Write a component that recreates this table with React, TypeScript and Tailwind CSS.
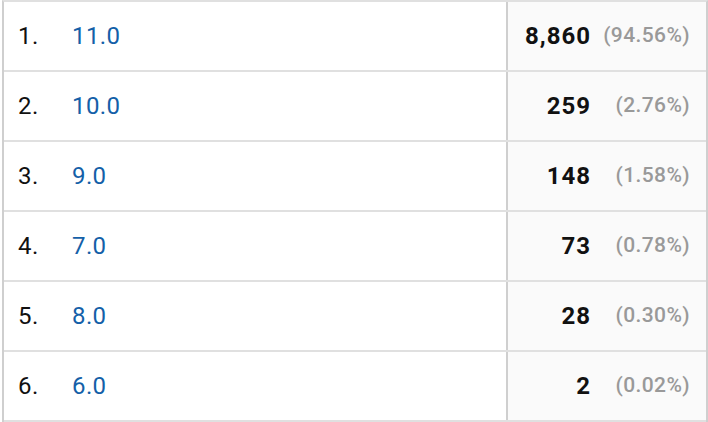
import React from 'react';

interface Row {
  label: string;
  count: string;
  pct: string;
}

const rows: Row[] = [
  { label: '11.0', count: '8,860', pct: '(94.56%)' },
  { label: '10.0', count: '259', pct: '(2.76%)' },
  { label: '9.0', count: '148', pct: '(1.58%)' },
  { label: '7.0', count: '73', pct: '(0.78%)' },
  { label: '8.0', count: '28', pct: '(0.30%)' },
  { label: '6.0', count: '2', pct: '(0.02%)' },
];

export default function App() {
  return (
    <div className="w-[708px] h-[422px] bg-white pl-[2px] font-['Roboto',sans-serif]">
      <div className="border-t-2 border-r-2 border-l-2 border-[#e0e0e0] border-l-[#cfcfcf] border-r-[#cfcfcf]">
        {rows.map((r, i) => (
          <div key={i} className="flex h-[70px] border-b-2 border-[#e0e0e0]">
            <div className="flex flex-1 items-center pl-[14px] pb-[1px] text-[24px] tracking-[0.4px] text-[#111]">
              <span className="w-[54px]">{i + 1}.</span>
              <span className="text-[#1460a8]">{r.label}</span>
            </div>
            <div className="flex w-[200px] items-center border-l-2 border-[#cfcfcf] bg-[#fafafa] pb-[1px]">
              <span className="w-[83px] text-right text-[24px] font-bold tracking-[1px] text-[#111]">{r.count}</span>
              <span className="w-[99px] text-right text-[21px] font-medium tracking-[0.4px] text-[#999]">{r.pct}</span>
            </div>
          </div>
        ))}
      </div>
    </div>
  );
}
